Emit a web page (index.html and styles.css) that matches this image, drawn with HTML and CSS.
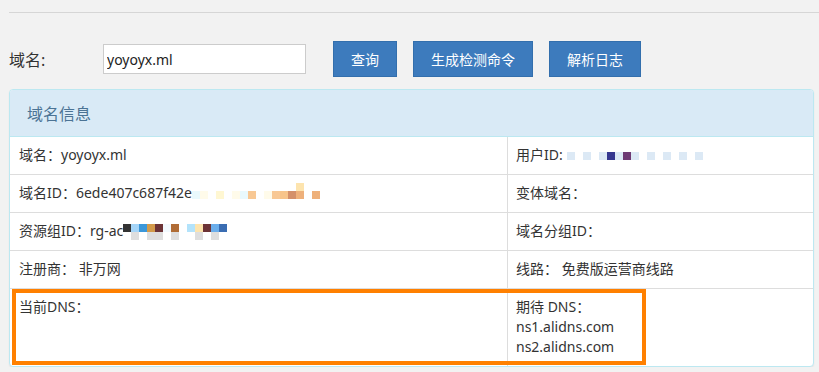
FILE: index.html
```html
<!DOCTYPE html>
<html lang="zh-CN">
<head>
    <meta charset="UTF-8">
    <meta name="viewport" content="width=device-width, initial-scale=1.0">
    <title>域名信息</title>
    <link rel="stylesheet" href="styles.css">
</head>
<body>
    <div class="page">
        <div class="topline"></div>

        <form class="query">
            <label class="query-label" for="domain">域名:</label>
            <input class="query-input" id="domain" type="text" value="yoyoyx.ml">
            <button class="btn" type="button">查询</button>
            <button class="btn" type="button">生成检测命令</button>
            <button class="btn" type="button">解析日志</button>
        </form>

        <div class="panel">
            <div class="panel-heading">域名信息</div>
            <div class="info-table">
                <div class="info-row">
                    <div class="cell">域名：yoyoyx.ml</div>
                    <div class="cell">用户ID: <span class="mosaic mosaic-user"><span class="mosaic-row">
                        <i class="mi"></i><i></i><i class="mi"></i><i></i><i class="mi"></i><i class="navy"></i><i class="mi"></i><i class="plum"></i><i class="mi"></i><i></i><i class="mi"></i><i></i><i class="mi"></i><i></i><i class="mi"></i><i></i><i class="mi"></i>
                    </span></span></div>
                </div>
                <div class="info-row">
                    <div class="cell">域名ID：6ede407c687f42e<span class="mosaic mosaic-id"><span class="mosaic-row">
                        <i></i><i></i><i></i><i></i><i></i><i></i><i></i><i></i><i></i><i></i><i></i><i></i><i></i><i class="sand"></i><i></i><i></i><i></i>
                    </span><span class="mosaic-row">
                        <i class="ice"></i><i class="cream"></i><i></i><i class="lemon"></i><i></i><i class="cream"></i><i class="ice"></i><i class="peach"></i><i></i><i class="cream"></i><i class="peach"></i><i class="peach2"></i><i class="clay"></i><i class="tan"></i><i></i><i class="tan"></i><i></i>
                    </span></span></div>
                    <div class="cell">变体域名：</div>
                </div>
                <div class="info-row">
                    <div class="cell">资源组ID：rg-ac<span class="mosaic mosaic-group"><span class="mosaic-row">
                        <i class="ink"></i><i class="sky"></i><i class="azure"></i><i class="ochre"></i><i class="wine"></i><i class="pale"></i><i class="rust"></i><i></i><i class="frost"></i><i class="sand"></i><i class="wine"></i><i class="corn"></i><i class="cobalt"></i>
                    </span><span class="mosaic-row">
                        <i></i><i class="gray"></i><i></i><i class="gray"></i><i class="gray"></i><i></i><i class="gray"></i><i></i><i></i><i class="gray"></i><i></i><i class="gray"></i><i></i>
                    </span></span></div>
                    <div class="cell">域名分组ID：</div>
                </div>
                <div class="info-row">
                    <div class="cell">注册商： 非万网</div>
                    <div class="cell">线路： 免费版运营商线路</div>
                </div>
                <div class="info-row dns-row">
                    <div class="cell">当前DNS：</div>
                    <div class="cell">期待 DNS：<br>ns1.alidns.com<br>ns2.alidns.com</div>
                    <div class="mark"></div>
                </div>
            </div>
        </div>
    </div>
</body>
</html>
```

FILE: styles.css
```css
body {
    margin: 0;
    background-color: #f2f2f2;
    font-family: "Noto Sans", "Noto Sans CJK SC", sans-serif;
    font-size: 14px;
    color: #333;
}
.page {
    padding: 0 5px 0 9px;
}
.topline {
    height: 12px;
    margin-right: -5px;
    border-bottom: 1px solid #d6d6d6;
}

/* search form */
.query {
    display: flex;
    align-items: center;
    height: 36px;
    margin: 28px 0 0;
}
.query-label {
    width: 94px;
    font-size: 16px;
    color: #333;
}
.query-input {
    width: 203px;
    height: 30px;
    box-sizing: border-box;
    margin: 0 27px 0 0;
    padding: 0 3px;
    border: 1px solid #ccc;
    background-color: #fff;
    font: 14px "Noto Sans", "Noto Sans CJK SC", sans-serif;
    color: #222;
}
.btn {
    height: 36px;
    margin-right: 16px;
    padding: 0 17px;
    border: 1px solid #336fad;
    background-color: #3d7bbd;
    color: #fff;
    font: 14px "Noto Sans", "Noto Sans CJK SC", sans-serif;
    cursor: pointer;
}

/* info panel */
.panel {
    margin-top: 12px;
    background-color: #fff;
    border: 1px solid #bce8f1;
    border-radius: 4px;
    box-shadow: 0 1px 2px rgba(0,0,0,0.06);
}
.panel-heading {
    display: flex;
    align-items: center;
    height: 46px;
    padding: 0 17px;
    background-color: #d9eaf6;
    border-bottom: 1px solid #bce8f1;
    border-radius: 3px 3px 0 0;
    color: #4b7394;
    font-size: 16px;
}
.info-row {
    display: grid;
    grid-template-columns: 497px 1fr;
    border-top: 1px solid #ddd;
}
.info-row:first-child {
    border-top: 0;
}
.cell {
    padding: 8px 9px 9px;
    line-height: 20px;
}
.cell + .cell {
    padding-left: 8px;
    border-left: 1px solid #ddd;
}
.dns-row {
    position: relative;
}
.mark {
    position: absolute;
    left: 2px;
    top: 0;
    width: 634px;
    height: 76px;
    box-sizing: border-box;
    border: 4px solid #ff8000;
}

/* pixelated redactions */
.mosaic {
    display: inline-block;
    vertical-align: top;
}
.mosaic-user {
    margin: 7px 0 0 1px;
}
.mosaic-group {
    margin-top: 3px;
}
.mosaic-row {
    display: flex;
}
.mosaic-row i {
    width: 8px;
    height: 8px;
}
.mi { background-color: #dce9f5; }
.navy { background-color: #35378f; }
.plum { background-color: #6e3a73; }
.ice { background-color: #e9f9fd; }
.cream { background-color: #fffbea; }
.lemon { background-color: #fff7d2; }
.peach { background-color: #f8c894; }
.peach2 { background-color: #f7c48a; }
.clay { background-color: #d4906a; }
.sand { background-color: #fde4ae; }
.tan { background-color: #eeb07a; }
.ink { background-color: #333; }
.sky { background-color: #a5d5f8; }
.azure { background-color: #3b97d9; }
.ochre { background-color: #d39a4a; }
.wine { background-color: #6c3336; }
.pale { background-color: #f2f9fe; }
.rust { background-color: #b06c35; }
.frost { background-color: #b3e3fb; }
.corn { background-color: #6baeeb; }
.cobalt { background-color: #3a6db2; }
.gray { background-color: #dedede; }
```
